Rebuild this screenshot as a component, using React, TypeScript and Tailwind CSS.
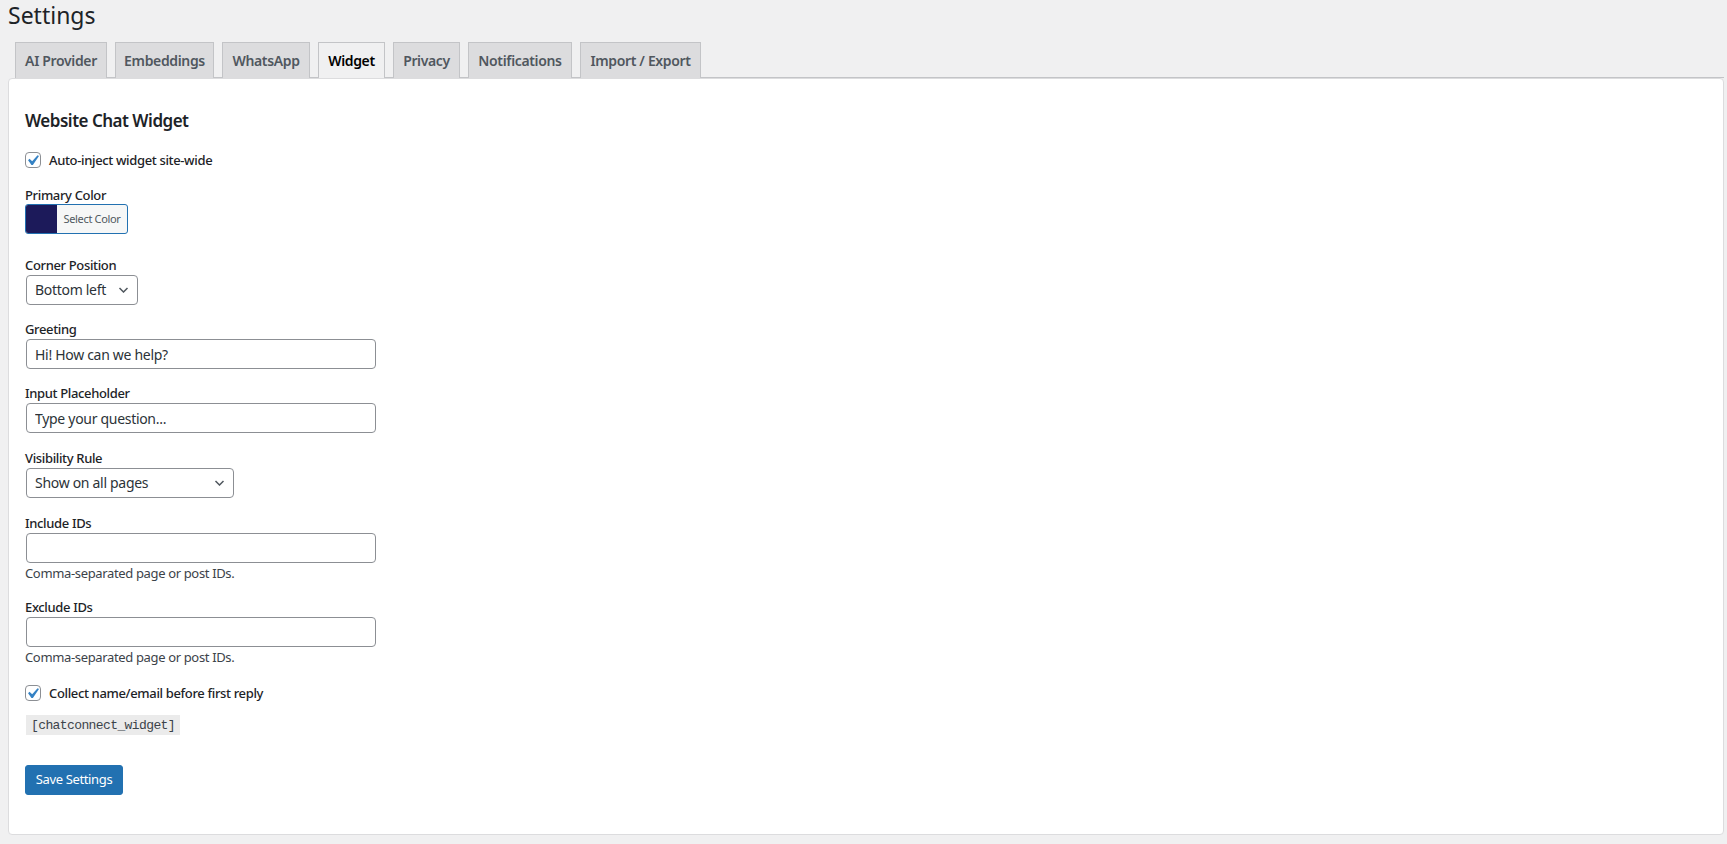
import React, { useState } from 'react';

const tabs = [
  { name: 'AI Provider', w: 'w-[92px]' },
  { name: 'Embeddings', w: 'w-[99px]' },
  { name: 'WhatsApp', w: 'w-[88px]' },
  { name: 'Widget', w: 'w-[67px]' },
  { name: 'Privacy', w: 'w-[67px]' },
  { name: 'Notifications', w: 'w-[104px]' },
  { name: 'Import / Export', w: 'w-[121px]' },
];

function Checkbox({ checked, onChange, label }: { checked: boolean; onChange: () => void; label: string }) {
  return (
    <label className="flex h-4 cursor-pointer items-center gap-2" onClick={onChange}>
      <span className="relative block h-4 w-4 shrink-0 rounded-[4px] border border-[#8c8f94] bg-white">
        {checked && (
          <svg viewBox="0 0 20 20" className="absolute -left-[4px] -top-[3px] h-[21px] w-[21px]">
            <path d="M14.83 4.89l1.34.94-5.81 8.38H9.02L5.78 9.67l1.34-1.25 2.57 2.4z" fill="#3582c4" />
          </svg>
        )}
      </span>
      <span className="font-[550] leading-[18px] text-[#1d2327]">{label}</span>
    </label>
  );
}

function Chevron() {
  return (
    <svg viewBox="0 0 10 6" className="pointer-events-none absolute right-[8px] top-1/2 h-[6px] w-[11px] -translate-y-1/2">
      <path d="M1 1l4 4 4-4" fill="none" stroke="#50575e" strokeWidth="1.5" />
    </svg>
  );
}

export default function App() {
  const [active, setActive] = useState('Widget');
  const [autoInject, setAutoInject] = useState(true);
  const [collect, setCollect] = useState(true);

  const labelCls = 'block mb-px font-[550] leading-[18px] text-[#1d2327]';
  const inputCls =
    'ml-px block h-[30px] w-[350px] rounded-[4px] border border-[#8c8f94] bg-white px-2 text-[14px] tracking-[-0.3px] text-[#2c3338] outline-none';

  return (
    <div className="min-h-screen bg-[#f0f0f1] pl-2 pr-[3px] font-['Noto_Sans',sans-serif] text-[13px] tracking-[-0.35px] text-[#3c434a]">
      <h1 className="text-[23px] font-normal leading-[30px] tracking-normal text-[#1d2327]">Settings</h1>

      {/* Tabs */}
      <nav className="ml-[7px] mt-3 flex gap-2 border-b border-[#c3c4c7]">
        {tabs.map((t) => (
          <button
            key={t.name}
            onClick={() => setActive(t.name)}
            className={`${t.w} -mb-px h-[36px] border border-b-0 border-[#c3c4c7] pb-px text-center text-[14px] font-semibold whitespace-nowrap ${
              active === t.name ? 'bg-[#f0f0f1] text-black' : 'border-b border-[#c3c4c7] bg-[#dcdcde] text-[#50575e]'
            }`}
          >
            {t.name}
          </button>
        ))}
      </nav>

      {/* Panel */}
      <div className="rounded-[4px] border border-[#dcdcde] bg-white px-4 pb-[39px] pt-[30px]">
        <h2 className="text-[17px] font-semibold leading-[24px] tracking-[-0.5px] text-[#1d2327]">Website Chat Widget</h2>

        <div className="mt-[19px]">
          <Checkbox checked={autoInject} onChange={() => setAutoInject(!autoInject)} label="Auto-inject widget site-wide" />
        </div>

        <div className="mt-[18px]">
          <span className="block font-[550] leading-[18px] text-[#1d2327]">Primary Color</span>
          <button className="flex h-[30px] w-[103px] overflow-hidden rounded-[3px] border border-[#2271b1] bg-[#f6f7f7]">
            <span className="h-full w-[31px] bg-[#1c1a5a]" />
            <span className="flex h-full flex-1 items-center justify-center text-[11px] text-[#50575e]">Select Color</span>
          </button>
        </div>

        <div className="mt-[22px]">
          <label className={labelCls}>Corner Position</label>
          <div className="relative ml-px h-[30px] w-[112px] rounded-[4px] border border-[#8c8f94] bg-white">
            <span className="block pl-2 text-[14px] leading-[28px] tracking-[-0.3px] text-[#2c3338]">Bottom left</span>
            <Chevron />
          </div>
        </div>

        <div className="mt-[15px]">
          <label className={labelCls}>Greeting</label>
          <input className={inputCls} defaultValue="Hi! How can we help?" />
        </div>

        <div className="mt-[15px]">
          <label className={labelCls}>Input Placeholder</label>
          <input className={inputCls} defaultValue="Type your question..." />
        </div>

        <div className="mt-4">
          <label className={labelCls}>Visibility Rule</label>
          <div className="relative ml-px h-[30px] w-[208px] rounded-[4px] border border-[#8c8f94] bg-white">
            <span className="block pl-2 text-[14px] leading-[28px] tracking-[-0.3px] text-[#2c3338]">Show on all pages</span>
            <Chevron />
          </div>
        </div>

        <div className="mt-4">
          <label className={labelCls}>Include IDs</label>
          <input className={inputCls} />
          <p className="mt-px leading-[18px]">Comma-separated page or post IDs.</p>
        </div>

        <div className="mt-4">
          <label className={labelCls}>Exclude IDs</label>
          <input className={inputCls} />
          <p className="mt-px leading-[18px]">Comma-separated page or post IDs.</p>
        </div>

        <div className="mt-[19px]">
          <Checkbox checked={collect} onChange={() => setCollect(!collect)} label="Collect name/email before first reply" />
        </div>

        <div className="mt-[14px]">
          <code className="ml-px inline-block h-[20px] bg-[#ebebeb] px-[5px] pt-[2px] font-['Liberation_Mono',monospace] text-[13px] leading-[17px] tracking-[-0.6px] text-[#3c434a]">
            [chatconnect_widget]
          </code>
        </div>

        <button className="mt-[30px] block h-[30px] w-[98px] rounded-[3px] border border-[#2271b1] bg-[#2271b1] text-[13px] text-white">
          Save Settings
        </button>
      </div>
    </div>
  );
}
